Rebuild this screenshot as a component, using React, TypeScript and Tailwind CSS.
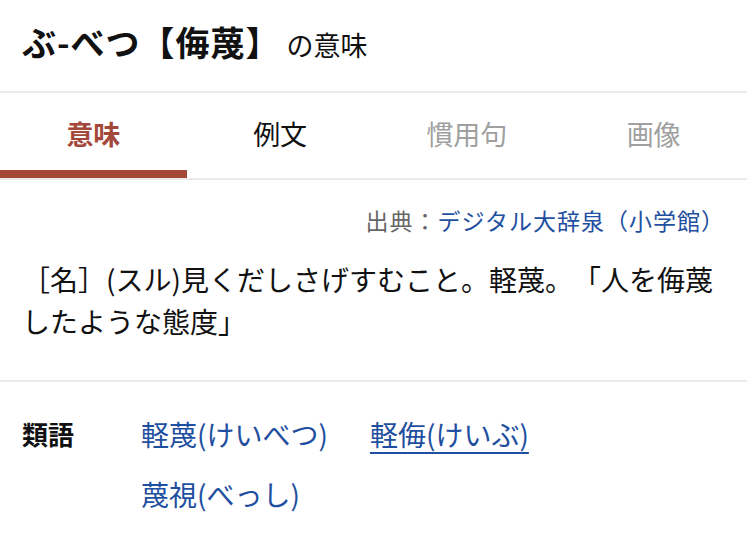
const TABS = [
  { id: 'meaning', label: '意味', tone: 'text-[#a3473a]' },
  { id: 'example', label: '例文', tone: 'text-[#111]' },
  { id: 'idiom', label: '慣用句', tone: 'text-[#a0a0a0]' },
  { id: 'image', label: '画像', tone: 'text-[#a0a0a0]' },
];

const FONT = { fontFamily: '"Noto Sans CJK JP", "Noto Sans", sans-serif' };

export default function App() {
  return (
    <div
      className="h-[540px] w-[747px] overflow-hidden bg-white text-[#111] [text-spacing-trim:space-all]"
      style={FONT}
    >
      <header className="flex h-[91px] items-baseline px-[22px] pt-[19px]">
        <h1 className="text-[34px] font-bold leading-[46px] tracking-[1px]">ぶ-べつ【侮蔑】</h1>
        <span className="ml-[6px] text-[27px]">の意味</span>
      </header>

      <nav className="grid grid-cols-4 border-y-2 border-[#ebebeb]">
        {TABS.map((tab, i) => (
          <div key={tab.id} className="flex h-[85px] flex-col">
            <div className={`flex flex-1 items-center justify-center pt-[6px] text-[27px] ${tab.tone} ${i === 0 ? 'font-bold' : ''}`}>
              {tab.label}
            </div>
            <div className={`h-2 ${i === 0 ? 'bg-[#a5483a]' : ''}`} />
          </div>
        ))}
      </nav>

      <section className="border-b-2 border-[#ebebeb] px-[22px] pb-[38px] pt-[24px]">
        <p className="text-right text-[23px] leading-[33px] tracking-[1px] text-[#666]">
          出典：<span className="text-[#1f4fa0]">デジタル大辞泉（小学館）</span>
        </p>
        <p className="mt-[21px] whitespace-nowrap text-[28px] leading-[42px]">
          ［名］(スル)見くだしさげすむこと。軽蔑。「人を侮蔑
          <br />
          したような態度」
        </p>
      </section>

      <section className="flex px-[22px] pt-[22px]">
        <div className="w-[119px] text-[26px] font-bold leading-[60px]">類語</div>
        <div className="flex w-[460px] flex-wrap gap-x-[42px] text-[28px] leading-[60px] text-[#1f4fa0]">
          <span>軽蔑(けいべつ)</span>
          <span className="underline decoration-2 underline-offset-[6px]">軽侮(けいぶ)</span>
          <span>蔑視(べっし)</span>
        </div>
      </section>
    </div>
  );
}
